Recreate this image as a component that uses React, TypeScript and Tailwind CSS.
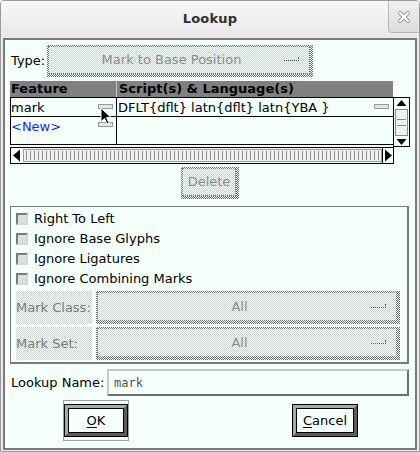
import React from "react";

const DARK =
  "bg-[image:repeating-conic-gradient(#6a6a6a_0%_25%,#f4fffa_0%_50%)] bg-[length:2px_2px]";
const LIGHT =
  "bg-[image:repeating-conic-gradient(#cdd4d0_0%_25%,#f4fffa_0%_50%)] bg-[length:2px_2px]";

function Indicator() {
  return (
    <div className="w-[15px] h-[4px] border-b border-r border-dotted border-[#555]" />
  );
}

function StippleBox({
  className,
  children,
}: {
  className: string;
  children?: React.ReactNode;
}) {
  return (
    <div className={`${DARK} pt-[1px] pl-[1px] pr-[3px] pb-[3px] ${className}`}>
      <div
        className={`${LIGHT} w-full h-full border border-dotted border-[#777] flex items-center`}
      >
        {children}
      </div>
    </div>
  );
}

function Check({ label }: { label: string }) {
  return (
    <div className="h-[20px] flex items-center">
      <div className="w-[12px] h-[12px] border-2 border-t-[#7a7a7a] border-l-[#7a7a7a] border-b-[#d6d6d6] border-r-[#d6d6d6] bg-[#dedede]" />
      <span className="ml-[6px] text-[13px] text-black">{label}</span>
    </div>
  );
}

function BigButton({ children }: { children: React.ReactNode }) {
  return (
    <div className="w-[66px] h-[33px] border border-black">
      <div className="w-full h-full border-[3px] border-t-[#a8a8a8] border-l-[#a8a8a8] border-b-[#5c5c5c] border-r-[#5c5c5c]">
        <div className="w-full h-full border border-black bg-[#f6fffb] flex items-center justify-center text-[13px] text-black">
          {children}
        </div>
      </div>
    </div>
  );
}

export default function App() {
  return (
    <div
      className="w-[420px] h-[452px] bg-[#ececec] border border-[#9a9a9a] rounded-t-[4px] flex flex-col overflow-hidden"
      style={{ fontFamily: "'DejaVu Sans', Verdana, sans-serif" }}
    >
      {/* Title bar */}
      <div className="h-[36px] shrink-0 relative flex items-center justify-center bg-[linear-gradient(#f8f8f8,#e8e8e8)]">
        <span className="font-bold text-[13px] text-[#2e2e2e] tracking-[0.2px]">
          Lookup
        </span>
        <div className="absolute right-0 top-0 w-[31px] h-[32px] border-l border-b border-[#b8b8b8] rounded-bl-[4px] bg-[linear-gradient(#f0f0f0,#dcdcdc)] flex items-center justify-center">
          <svg width="14" height="14" viewBox="0 0 14 14">
            <path d="M3 3 L11 11 M11 3 L3 11" stroke="#9a9a9a" strokeWidth="4" strokeLinecap="round" />
            <path d="M3 3 L11 11 M11 3 L3 11" stroke="#ffffff" strokeWidth="2" strokeLinecap="round" />
          </svg>
        </div>
      </div>

      {/* Body */}
      <div className="px-[2px] pt-[1px] pb-[1px] flex-1 flex flex-col">
        <div className="flex-1 border-2 border-[#7a7a7a] bg-[#f4fffa] flex flex-col relative">
          {/* Type row */}
          <div className="mt-[5px] h-[32px] flex items-center">
            <span className="ml-[6px] w-[36px] text-[13px] text-black">Type:</span>
            <StippleBox className="w-[266px] h-[32px]">
              <div className="flex-1 text-center text-[13px] text-[#8a8a8a] pl-[10px]">
                Mark to Base Position
              </div>
              <div className="mr-[10px] mb-[2px]">
                <Indicator />
              </div>
            </StippleBox>
          </div>

          {/* Table */}
          <div className="mt-[4px] ml-[5px] w-[400px] flex flex-col">
            <div className="flex">
              <div className="w-[383px] flex flex-col">
                <div className="h-[16px] bg-[#808080] flex text-[13px] font-bold text-black leading-[16px]">
                  <div className="w-[107px] pl-[1px] border-r border-[#c8c8c8]">Feature</div>
                  <div className="flex-1 pl-[2px]">Script(s) &amp; Language(s)</div>
                </div>
                <div className="border border-black border-r-0 flex flex-col text-[13px]">
                  <div className="h-[19px] flex border-b border-black">
                    <div className="w-[106px] border-r border-black flex items-center relative">
                      <span className="pl-[0px] leading-[19px]">mark</span>
                      <div className="absolute left-[87px] top-[6px] w-[15px] h-[5px] border border-[#9a9a9a] bg-[#e4e4e4]" />
                    </div>
                    <div className="flex-1 flex items-center relative">
                      <span className="pl-[1px] leading-[19px]">DFLT{"{dflt}"} latn{"{dflt}"} latn{"{YBA }"}</span>
                      <div className="absolute left-[257px] top-[6px] w-[15px] h-[5px] border border-[#9a9a9a] bg-[#e4e4e4]" />
                    </div>
                  </div>
                  <div className="h-[27px] flex">
                    <div className="w-[106px] border-r border-black relative">
                      <span className="text-[#1a1aff] leading-[17px]">&lt;New&gt;</span>
                      <div className="absolute left-[87px] top-[5px] w-[15px] h-[5px] border border-[#9a9a9a] bg-[#e4e4e4]" />
                    </div>
                    <div className="flex-1" />
                  </div>
                </div>
              </div>
              {/* Vertical scrollbar */}
              <div className="w-[17px] mt-[16px] border border-black flex flex-col items-center bg-[#f4fffa]">
                <svg width="11" height="8" viewBox="0 0 11 8" className="mt-[1px]">
                  <path d="M0.5 7 L5.5 1 L10.5 7 Z" fill="#000" />
                </svg>
                <div className="mt-[2px] w-[13px] h-[27px] border border-[#8a8a8a] bg-[#eef2f0] flex flex-col items-center justify-center gap-[5px]">
                  <div className="w-[9px] h-px bg-[#8a8a8a]" />
                  <div className="w-[9px] h-px bg-[#8a8a8a]" />
                </div>
                <svg width="11" height="8" viewBox="0 0 11 8" className="mt-[2px]">
                  <path d="M0.5 1 L5.5 7 L10.5 1 Z" fill="#000" />
                </svg>
              </div>
            </div>
            {/* Horizontal scrollbar */}
            <div className="w-[384px] h-[17px] border border-black flex items-center bg-[#f4fffa]">
              <svg width="10" height="13" viewBox="0 0 10 13" className="ml-[1px]">
                <path d="M8 0.5 L1 6.5 L8 12.5 Z" fill="#000" />
              </svg>
              <div className="ml-[1px] w-[361px] h-[13px] border border-[#9a9a9a] bg-[#eef2f0] flex items-center">
                <div className="mx-[2px] flex-1 h-[9px] bg-[image:repeating-linear-gradient(90deg,#8c8c8c_0px,#8c8c8c_1px,transparent_1px,transparent_4px)]" />
              </div>
              <div className="w-px h-full bg-black ml-[0px]" />
              <svg width="10" height="13" viewBox="0 0 10 13">
                <path d="M2 0.5 L9 6.5 L2 12.5 Z" fill="#000" />
              </svg>
            </div>
          </div>

          {/* Delete */}
          <div className="mt-[3px] ml-[176px]">
            <StippleBox className="w-[58px] h-[32px]">
              <div className="flex-1 text-center text-[13px] text-[#8a8a8a]">Delete</div>
            </StippleBox>
          </div>

          {/* Group */}
          <div className="mt-[7px] ml-[5px] w-[399px] h-[158px] border border-[#7a7a7a] border-r-2 border-b-2 flex flex-col pl-[5px]">
            <div className="mt-[2px]">
              <Check label="Right To Left" />
              <Check label="Ignore Base Glyphs" />
              <Check label="Ignore Ligatures" />
              <Check label="Ignore Combining Marks" />
            </div>
            <div className="mt-[2px] flex">
              <div className={`${LIGHT} w-[76px] h-[33px] flex items-center text-[13px] text-[#7a7a7a]`}>
                Mark Class:
              </div>
              <StippleBox className="ml-[4px] w-[304px] h-[33px]">
                <div className="flex-1 text-center text-[13px] text-[#8a8a8a] pl-[10px]">All</div>
                <div className="mr-[10px] mb-[2px]">
                  <Indicator />
                </div>
              </StippleBox>
            </div>
            <div className="mt-[3px] flex">
              <div className={`${LIGHT} w-[76px] h-[33px] flex items-center text-[13px] text-[#7a7a7a]`}>
                Mark Set:
              </div>
              <StippleBox className="ml-[4px] w-[304px] h-[33px]">
                <div className="flex-1 text-center text-[13px] text-[#8a8a8a] pl-[10px]">All</div>
                <div className="mr-[10px] mb-[2px]">
                  <Indicator />
                </div>
              </StippleBox>
            </div>
          </div>

          {/* Lookup Name */}
          <div className="mt-[5px] h-[27px] flex items-center">
            <span className="ml-[6px] w-[96px] text-[13px] text-black">Lookup Name:</span>
            <div className="w-[302px] h-[27px] border-2 border-t-[#c8c8c8] border-l-[#c8c8c8] border-b-[#6e6e6e] border-r-[#6e6e6e] bg-[#f4fffa] flex items-center">
              <span
                className="ml-[5px] text-[12px] text-[#555]"
                style={{ fontFamily: "'DejaVu Sans Mono', 'Liberation Mono', monospace" }}
              >
                mark
              </span>
            </div>
          </div>

          {/* Buttons */}
          <div className="mt-[4px] flex items-start">
            <div className="ml-[58px] w-[66px] h-[41px] border border-[#a0a0a0] flex items-center justify-center">
              <BigButton>
                <span>
                  <span className="underline underline-offset-[2px]">O</span>K
                </span>
              </BigButton>
            </div>
            <div className="ml-[163px] mt-[4px] w-[66px]">
              <BigButton>
                <span>
                  <span className="underline underline-offset-[2px]">C</span>ancel
                </span>
              </BigButton>
            </div>
          </div>

          {/* Mouse cursor */}
          <svg
            width="14"
            height="20"
            viewBox="0 0 14 20"
            className="absolute left-[95px] top-[67px]"
          >
            <path
              d="M1 1 L1 15 L4.5 11.5 L7 17 L9 16 L6.5 10.5 L11 10.5 Z"
              fill="#000"
              stroke="#fff"
              strokeWidth="1"
            />
          </svg>
        </div>
      </div>
    </div>
  );
}
